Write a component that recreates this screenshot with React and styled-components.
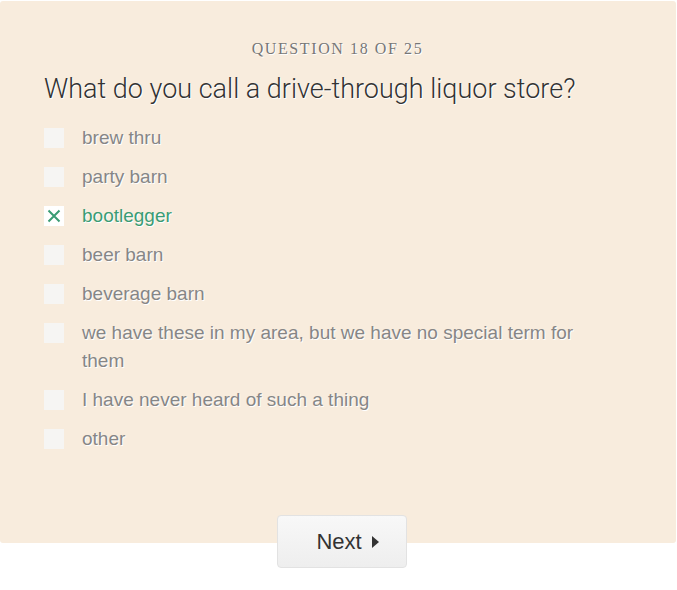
import React from "react";
import styled, { createGlobalStyle } from "styled-components";

const Global = createGlobalStyle`
  html, body { margin: 0; padding: 0; background: #fff; }
  body { font-family: "Liberation Sans", Arial, sans-serif; }
`;

const Page = styled.div`
  width: 677px;
  padding-top: 1px;
  display: flex;
  flex-direction: column;
  align-items: center;
`;

const Panel = styled.section`
  width: 676px;
  align-self: flex-start;
  box-sizing: border-box;
  background: #f8ecdd;
  border-radius: 3px;
  padding: 38px 44px 90px;
`;

const Counter = styled.div`
  font-family: "Liberation Serif", "Times New Roman", serif;
  font-size: 16px;
  line-height: 20px;
  letter-spacing: 1.6px;
  color: #777;
  text-align: center;
  text-shadow: 1px 1px 0 #fff;
  margin-right: 1px;
`;

const Question = styled.h1`
  margin: 14px 0 19px;
  font-family: Roboto, "Liberation Sans", Arial, sans-serif;
  font-weight: 300;
  font-size: 27px;
  line-height: 32px;
  color: #333;
  text-shadow: 1px 1px 0 #fff;
`;

const List = styled.ul`
  list-style: none;
  margin: 0;
  padding: 0;
  display: flex;
  flex-direction: column;
  gap: 11px;
`;

const Row = styled.li`
  display: flex;
  align-items: flex-start;
  gap: 18px;
`;

const Box = styled.span`
  flex: none;
  width: 20px;
  height: 20px;
  margin-top: 4px;
  background: ${(p) => (p.$checked ? "#fff" : "#f6f5f3")};
  display: flex;
  align-items: center;
  justify-content: center;
`;

const Label = styled.span`
  max-width: 520px;
  font-size: 19px;
  line-height: 28px;
  color: ${(p) => (p.$checked ? "#3a9c74" : "#868686")};
  text-shadow: 1px 1px 0 #fff;
`;

const ButtonWrap = styled.div`
  margin-top: -28px;
  display: flex;
  justify-content: center;
  padding-left: 7px;
`;

const NextButton = styled.button`
  width: 130px;
  height: 53px;
  box-sizing: border-box;
  border: 1px solid #e2e2e2;
  border-radius: 4px;
  background: linear-gradient(#f8f8f8, #eeeeee);
  font-family: "Liberation Sans", Arial, sans-serif;
  font-size: 22px;
  color: #333;
  display: flex;
  align-items: center;
  justify-content: center;
  gap: 10px;
  cursor: pointer;
  padding: 0 0 0 11px;
`;

const options = [
  "brew thru",
  "party barn",
  "bootlegger",
  "beer barn",
  "beverage barn",
  "we have these in my area, but we have no special term for them",
  "I have never heard of such a thing",
  "other",
];

function XMark() {
  return (
    <svg width="14" height="14" viewBox="0 0 14 14">
      <path d="M1.5 1.5 L12.5 12.5 M12.5 1.5 L1.5 12.5" stroke="#3a9c74" strokeWidth="2" fill="none" />
    </svg>
  );
}

export default function App() {
  const selected = 2;
  return (
    <>
      <Global />
      <Page>
        <Panel>
          <Counter>QUESTION 18 OF 25</Counter>
          <Question>What do you call a drive-through liquor store?</Question>
          <List>
            {options.map((o, i) => (
              <Row key={o}>
                <Box $checked={i === selected}>{i === selected && <XMark />}</Box>
                <Label $checked={i === selected}>{o}</Label>
              </Row>
            ))}
          </List>
        </Panel>
        <ButtonWrap>
          <NextButton>
            Next
            <svg width="7" height="12" viewBox="0 0 7 12">
              <path d="M0 0 L7 6 L0 12 Z" fill="#333" />
            </svg>
          </NextButton>
        </ButtonWrap>
      </Page>
    </>
  );
}
